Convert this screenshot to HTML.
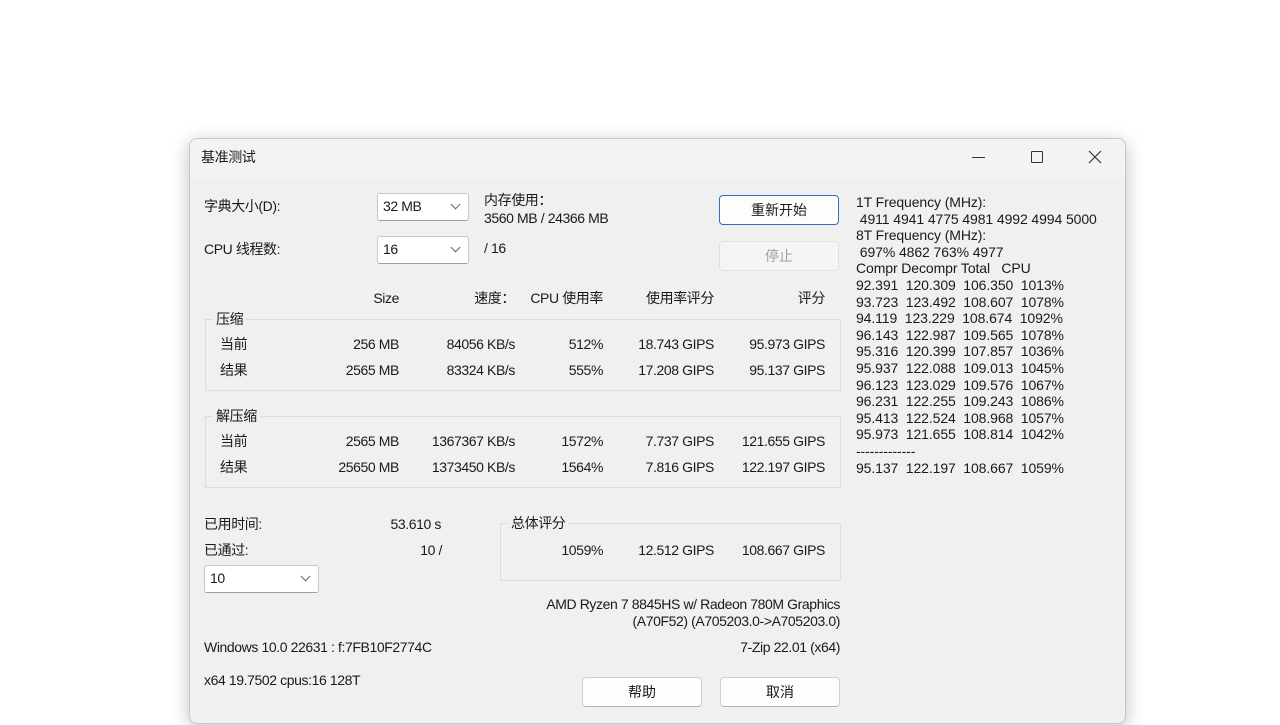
<!DOCTYPE html>
<html><head><meta charset="utf-8"><style>
body{margin:0;width:1280px;height:725px;background:#fff;position:relative;overflow:hidden;font-family:"Liberation Sans","Noto Sans CJK SC",sans-serif;font-size:14px;color:#1a1a1a}
.win{position:absolute;left:189px;top:138px;width:935px;height:584px;background:#f0f0f0;border:1px solid #c8c8c8;border-radius:8px;box-shadow:0 4px 18px rgba(0,0,0,.25);overflow:hidden}
.tb{position:absolute;left:0;top:0;right:0;height:40px;background:#f3f3f3}
.t{position:absolute;white-space:nowrap;line-height:18px;letter-spacing:-0.4px}
.r{text-align:right}
.grp{position:absolute;border:1px solid #dcdcdc}
.cb{position:absolute;background:#fff;border:1px solid #c8c8c8;border-bottom-color:#a0a0a0;border-radius:3px;height:26px}
.cb span{position:absolute;left:5px;top:4px;letter-spacing:-0.4px}
.cb i{position:absolute;right:9px;top:7px;width:6px;height:6px;border-right:1px solid #666;border-bottom:1px solid #666;transform:rotate(45deg)}
.btn{position:absolute;background:#fdfdfd;border:1px solid #d0d0d0;border-bottom-color:#b0b0b0;border-radius:4px;text-align:center;line-height:28px;height:28px}
.mono{font-size:14px;line-height:16.6px;letter-spacing:-0.1px}
</style></head><body>
<div class="win">
<div class="tb"></div>
<div class="t" style="left:11px;top:9px">基准测试</div>
<div style="position:absolute;left:782px;top:18px;width:13px;border-top:1px solid #333"></div>
<div style="position:absolute;left:841px;top:12px;width:10px;height:10px;border:1px solid #333;border-radius:1px"></div>
<svg style="position:absolute;left:898px;top:11px" width="14" height="14"><path d="M1 1L13 13M13 1L1 13" stroke="#333" stroke-width="1.2"/></svg>
</div>
<div class="t" style="left:204px;top:197px">字典大小(D):</div>
<div class="cb" style="left:377px;top:193px;width:90px"><span>32 MB</span><i></i></div>
<div class="t" style="left:484px;top:191px">内存使用：</div>
<div class="t" style="left:484px;top:209px">3560 MB / 24366 MB</div>
<div class="t" style="left:204px;top:240px">CPU 线程数:</div>
<div class="cb" style="left:377px;top:236px;width:90px"><span>16</span><i></i></div>
<div class="t" style="left:484px;top:239px">/ 16</div>
<div class="btn" style="left:719px;top:195px;width:118px;border:1.5px solid #2f6fbf;">重新开始</div>
<div class="btn" style="left:719px;top:241px;width:118px;background:#f5f5f5;color:#a0a0a0;border-color:#e0e0e0">停止</div>

<div class="t r" style="right:881px;top:289px">Size</div>
<div class="t r" style="right:765px;top:289px">速度：</div>
<div class="t r" style="right:677px;top:289px">CPU 使用率</div>
<div class="t r" style="right:566px;top:289px">使用率评分</div>
<div class="t r" style="right:455px;top:289px">评分</div>

<div class="grp" style="left:205px;top:319px;width:634px;height:70px"></div>
<div class="t" style="left:213px;top:310px;background:#f0f0f0;padding:0 3px">压缩</div>
<div class="t" style="left:220px;top:335px">当前</div>
<div class="t r" style="right:881px;top:335px">256 MB</div>
<div class="t r" style="right:765px;top:335px">84056 KB/s</div>
<div class="t r" style="right:677px;top:335px">512%</div>
<div class="t r" style="right:566px;top:335px">18.743 GIPS</div>
<div class="t r" style="right:455px;top:335px">95.973 GIPS</div>
<div class="t" style="left:220px;top:361px">结果</div>
<div class="t r" style="right:881px;top:361px">2565 MB</div>
<div class="t r" style="right:765px;top:361px">83324 KB/s</div>
<div class="t r" style="right:677px;top:361px">555%</div>
<div class="t r" style="right:566px;top:361px">17.208 GIPS</div>
<div class="t r" style="right:455px;top:361px">95.137 GIPS</div>

<div class="grp" style="left:205px;top:416px;width:634px;height:70px"></div>
<div class="t" style="left:213px;top:407px;background:#f0f0f0;padding:0 3px">解压缩</div>
<div class="t" style="left:220px;top:432px">当前</div>
<div class="t r" style="right:881px;top:432px">2565 MB</div>
<div class="t r" style="right:765px;top:432px">1367367 KB/s</div>
<div class="t r" style="right:677px;top:432px">1572%</div>
<div class="t r" style="right:566px;top:432px">7.737 GIPS</div>
<div class="t r" style="right:455px;top:432px">121.655 GIPS</div>
<div class="t" style="left:220px;top:458px">结果</div>
<div class="t r" style="right:881px;top:458px">25650 MB</div>
<div class="t r" style="right:765px;top:458px">1373450 KB/s</div>
<div class="t r" style="right:677px;top:458px">1564%</div>
<div class="t r" style="right:566px;top:458px">7.816 GIPS</div>
<div class="t r" style="right:455px;top:458px">122.197 GIPS</div>

<div class="t" style="left:204px;top:515px">已用时间:</div>
<div class="t r" style="right:839px;top:515px">53.610 s</div>
<div class="t" style="left:204px;top:541px">已通过:</div>
<div class="t r" style="right:838px;top:541px">10 /</div>
<div class="cb" style="left:204px;top:565px;width:113px"><span>10</span><i></i></div>

<div class="grp" style="left:500px;top:523px;width:339px;height:56px"></div>
<div class="t" style="left:508px;top:514px;background:#f0f0f0;padding:0 3px">总体评分</div>
<div class="t r" style="right:677px;top:541px">1059%</div>
<div class="t r" style="right:566px;top:541px">12.512 GIPS</div>
<div class="t r" style="right:455px;top:541px">108.667 GIPS</div>

<div class="t r" style="right:440px;top:595px">AMD Ryzen 7 8845HS w/ Radeon 780M Graphics</div>
<div class="t r" style="right:440px;top:612px">(A70F52) (A705203.0-&gt;A705203.0)</div>
<div class="t" style="left:204px;top:638px">Windows 10.0 22631 : f:7FB10F2774C</div>
<div class="t r" style="right:440px;top:638px">7-Zip 22.01 (x64)</div>
<div class="t" style="left:204px;top:671px">x64 19.7502 cpus:16 128T</div>
<div class="btn" style="left:582px;top:677px;width:118px">帮助</div>
<div class="btn" style="left:720px;top:677px;width:118px">取消</div>

<div class="t mono" style="left:856px;top:194px">1T Frequency (MHz):<br>&nbsp;4911 4941 4775 4981 4992 4994 5000<br>8T Frequency (MHz):<br>&nbsp;697% 4862 763% 4977<br>Compr Decompr Total &nbsp; CPU<br>92.391 &nbsp;120.309 &nbsp;106.350 &nbsp;1013%<br>93.723 &nbsp;123.492 &nbsp;108.607 &nbsp;1078%<br>94.119 &nbsp;123.229 &nbsp;108.674 &nbsp;1092%<br>96.143 &nbsp;122.987 &nbsp;109.565 &nbsp;1078%<br>95.316 &nbsp;120.399 &nbsp;107.857 &nbsp;1036%<br>95.937 &nbsp;122.088 &nbsp;109.013 &nbsp;1045%<br>96.123 &nbsp;123.029 &nbsp;109.576 &nbsp;1067%<br>96.231 &nbsp;122.255 &nbsp;109.243 &nbsp;1086%<br>95.413 &nbsp;122.524 &nbsp;108.968 &nbsp;1057%<br>95.973 &nbsp;121.655 &nbsp;108.814 &nbsp;1042%<br>-------------<br>95.137 &nbsp;122.197 &nbsp;108.667 &nbsp;1059%</div>
</body></html>
